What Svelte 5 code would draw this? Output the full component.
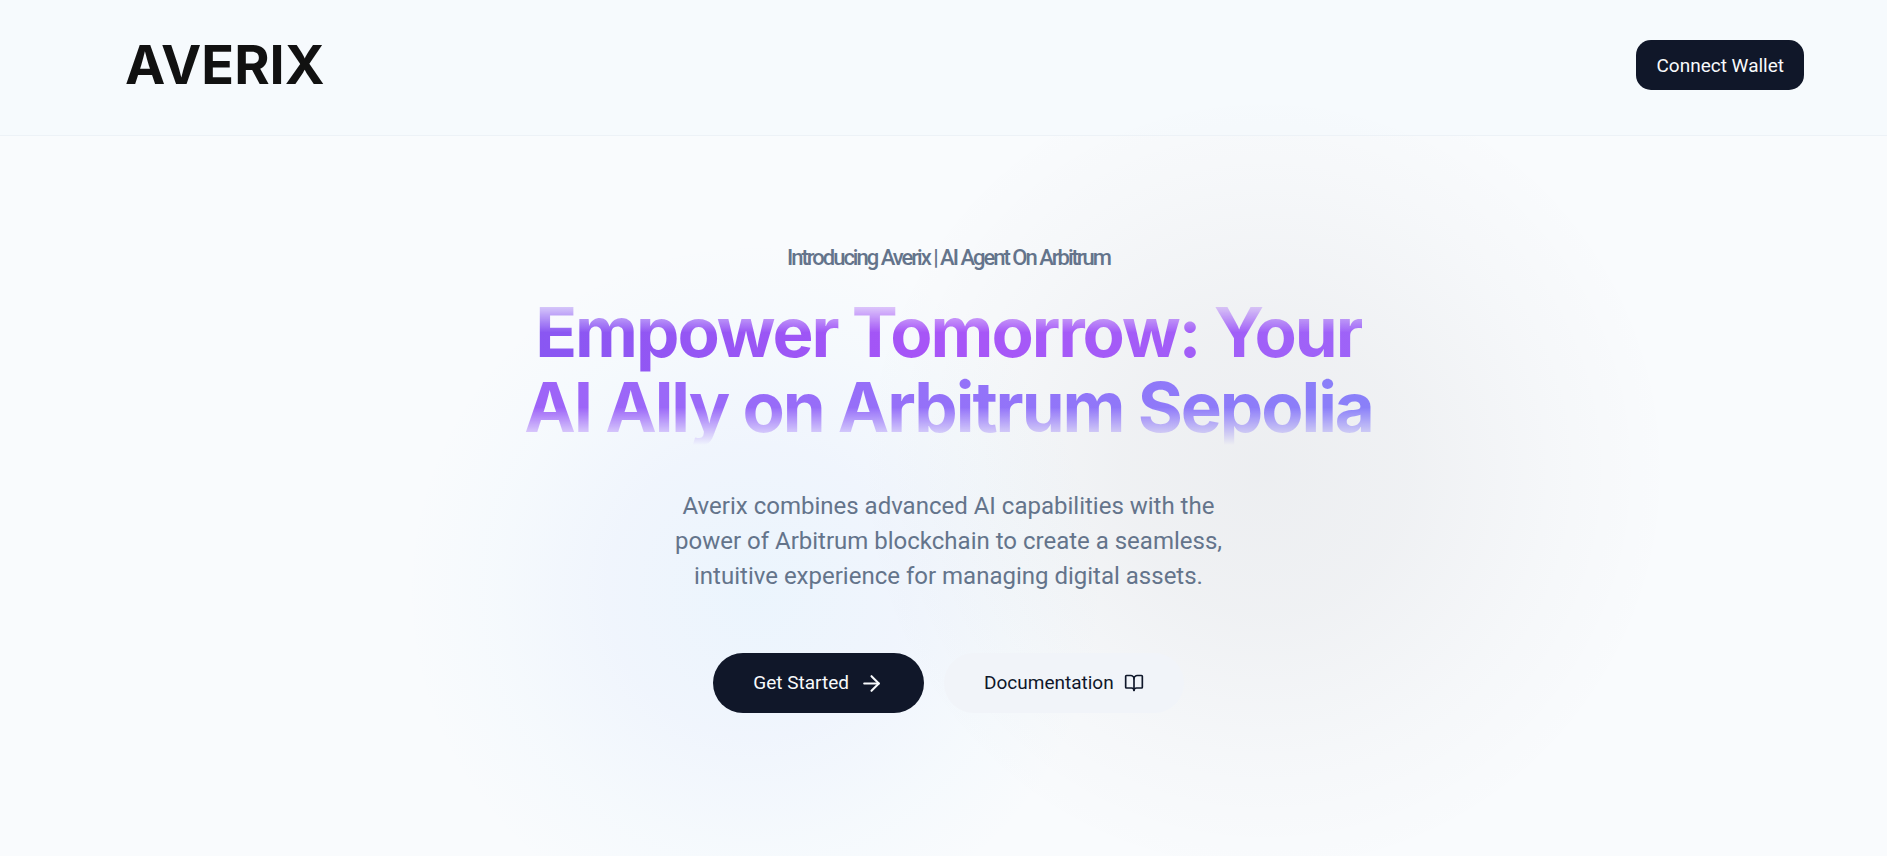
<script>
  const intro = 'Introducing Averix | AI Agent On Arbitrum';
  const lines = [
    'Averix combines advanced AI capabilities with the',
    'power of Arbitrum blockchain to create a seamless,',
    'intuitive experience for managing digital assets.'
  ];
</script>

<div class="page">
  <header class="topbar">
    <a class="logo" href="#home">AVERIX</a>
    <button class="connect" type="button">Connect Wallet</button>
  </header>

  <main class="hero">
    <p class="intro">{intro}</p>
    <h1><span>Empower Tomorrow: Your<br />AI Ally on Arbitrum Sepolia</span></h1>
    <p class="lead">
      {#each lines as line, i}{line}{#if i < lines.length - 1}<br />{/if}{/each}
    </p>
    <div class="actions">
      <a class="pill primary" href="#start">
        Get Started
        <svg width="25" height="25" viewBox="0 0 24 24" aria-hidden="true">
          <path d="M5 12h14" />
          <path d="m12 5 7 7-7 7" />
        </svg>
      </a>
      <a class="pill secondary" href="#docs">
        Documentation
        <svg width="20" height="20" viewBox="0 0 24 24" aria-hidden="true">
          <path d="M12 7v14" />
          <path d="M3 18a1 1 0 0 1-1-1V4a1 1 0 0 1 1-1h5a4 4 0 0 1 4 4 4 4 0 0 1 4-4h5a1 1 0 0 1 1 1v13a1 1 0 0 1-1 1h-6a3 3 0 0 0-3 3 3 3 0 0 0-3-3z" />
        </svg>
      </a>
    </div>
  </main>
</div>

<style>
  :global(body) {
    margin: 0;
    background: #f9fbfd;
  }

  .page {
    box-sizing: border-box;
    min-height: 100vh;
    font-family: Roboto, 'Liberation Sans', sans-serif;
    color: #0f172a;
    background:
      radial-gradient(circle 410px at 67% 55%, rgba(24, 20, 32, 0.055), rgba(24, 20, 32, 0.045) 35%, rgba(24, 20, 32, 0.014) 72%, transparent),
      radial-gradient(circle 350px at 40% 69%, rgba(96, 180, 250, 0.09), rgba(96, 150, 250, 0.058) 42%, rgba(96, 190, 250, 0.022) 75%, transparent),
      #f9fbfd;
  }

  .topbar {
    display: flex;
    align-items: center;
    justify-content: space-between;
    padding: 40px 83px 45px 125px;
    border-bottom: 1px solid #edf2f7;
    background: rgba(243, 250, 254, 0.5);
  }

  .logo {
    font-family: Inter, sans-serif;
    font-size: 54px;
    font-weight: 700;
    line-height: 50px;
    color: #111;
    text-decoration: none;
  }

  .connect {
    height: 50px;
    padding: 0 20px;
    border: 0;
    border-radius: 15px;
    background: #101729;
    color: #f8fafc;
    font: 400 19px/25px Roboto, sans-serif;
  }

  .hero {
    display: flex;
    flex-direction: column;
    align-items: center;
    padding: 104px 0 80px 10px;
    text-align: center;
  }

  .intro {
    margin: 0;
    font-size: 22px;
    font-weight: 500;
    line-height: 35px;
    letter-spacing: -2px;
    color: #64748b;
  }

  h1 {
    margin: 20px 0 0;
    font-family: Inter, sans-serif;
    font-size: 69px;
    font-weight: 700;
    line-height: 75px;
    letter-spacing: -0.03em;
    -webkit-mask-image: linear-gradient(transparent, #000 25%, #000 75%, transparent);
    mask-image: linear-gradient(transparent, #000 25%, #000 75%, transparent);
  }

  h1 span {
    color: transparent;
    background: linear-gradient(90deg, #8957f2, #a855f7 24%, #8a80f9);
    -webkit-background-clip: text;
    background-clip: text;
  }

  .lead {
    margin: 44px 0 0;
    font-size: 24px;
    font-weight: 400;
    line-height: 35px;
    color: #64748b;
  }

  .actions {
    display: flex;
    gap: 20px;
    margin-top: 59px;
  }

  .pill {
    display: flex;
    align-items: center;
    gap: 10px;
    height: 60px;
    padding: 0 40px;
    border-radius: 30px;
    font-size: 19px;
    line-height: 30px;
    text-decoration: none;
  }

  .primary {
    background: #101729;
    color: #f8fafc;
  }

  .secondary {
    background: #f1f4f9;
    color: #0f172a;
  }

  svg {
    fill: none;
    stroke: currentColor;
    stroke-width: 2;
    stroke-linecap: round;
    stroke-linejoin: round;
  }
</style>
